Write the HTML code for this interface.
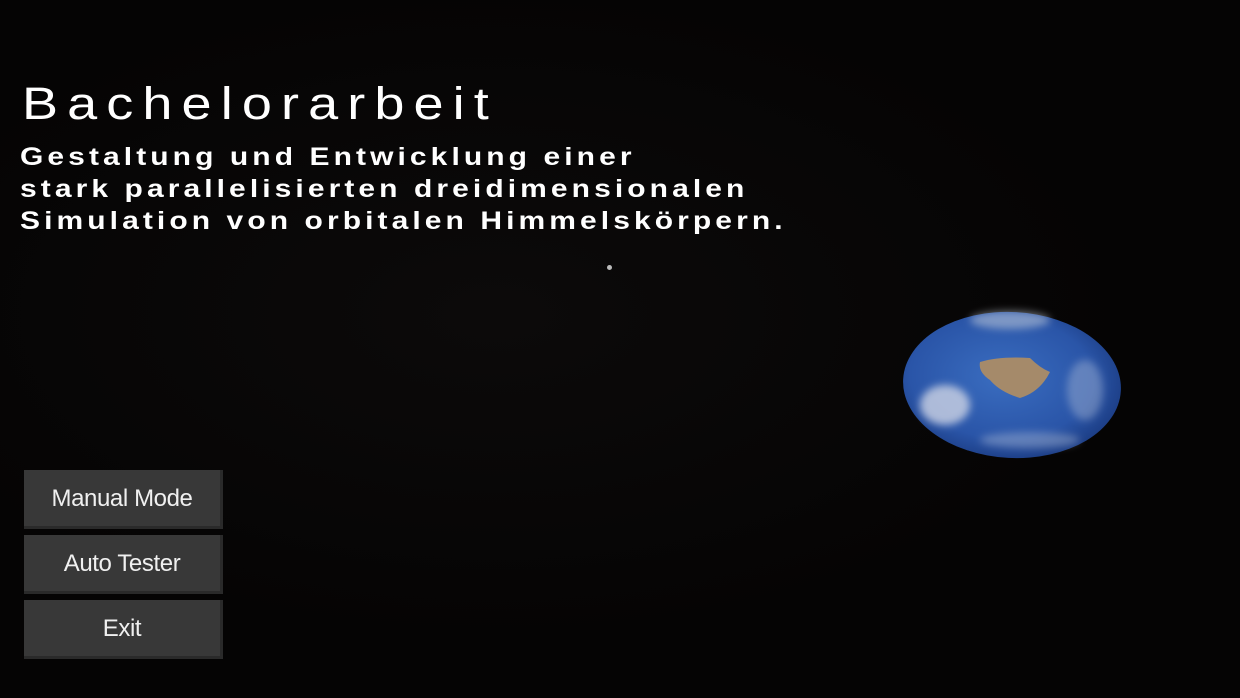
<!DOCTYPE html>
<html><head><style>
body{margin:0;width:1240px;height:698px;background:#050404;overflow:hidden;position:relative;font-family:"Liberation Sans",sans-serif;color:#fff}
.t{position:absolute;left:22px;top:76px;font-size:45px;letter-spacing:7.6px;line-height:56px;transform:scaleX(1.2);transform-origin:left top;white-space:nowrap}
.s{position:absolute;left:20px;top:141px;font-size:25px;letter-spacing:3.4px;line-height:32px;font-weight:bold;transform:scaleX(1.2);transform-origin:left top;white-space:nowrap}
.b{position:absolute;left:24px;width:196px;height:56px;background:#383838;border-right:3px solid #2a2a2a;border-bottom:3px solid #2a2a2a;box-sizing:content-box;font-size:24px;letter-spacing:-0.4px;text-align:center;line-height:58px;color:#f0f0f0}
</style></head><body>
<div style="position:absolute;inset:0;background:radial-gradient(ellipse at 40% 45%,#0c0a0a 0%,#050404 60%)"></div>
<div class="t">Bachelorarbeit</div>
<div class="s">Gestaltung und Entwicklung einer<br>stark parallelisierten dreidimensionalen<br>Simulation von orbitalen Himmelskörpern.</div>
<div style="position:absolute;left:607px;top:265px;width:5px;height:5px;border-radius:50%;background:#bbb"></div>
<svg style="position:absolute;left:0;top:0" width="1240" height="698">
<defs><radialGradient id="g" cx="45%" cy="45%" r="60%"><stop offset="0" stop-color="#3a6dc0"/><stop offset="0.7" stop-color="#2a55a8"/><stop offset="1" stop-color="#1a3a80"/></radialGradient>
<filter id="bl"><feGaussianBlur stdDeviation="4"/></filter></defs>
<ellipse cx="1012" cy="385" rx="109" ry="73" transform="rotate(3 1012 385)" fill="url(#g)"/>
<path d="M980 362 Q1000 356 1030 358 Q1040 368 1050 372 Q1040 392 1020 398 Q1000 392 990 380 Q978 372 980 362Z" fill="#a58a6a"/>
<g filter="url(#bl)">
<ellipse cx="945" cy="405" rx="25" ry="20" fill="#d8dce8" opacity="0.75"/>
<ellipse cx="1010" cy="320" rx="40" ry="9" fill="#cfd8e0" opacity="0.5"/>
<ellipse cx="1085" cy="390" rx="18" ry="30" fill="#c8d0e0" opacity="0.35"/>
<ellipse cx="1030" cy="440" rx="50" ry="8" fill="#c8d0e0" opacity="0.35"/>
</g>
</svg>
<div class="b" style="top:470px">Manual Mode</div>
<div class="b" style="top:535px">Auto Tester</div>
<div class="b" style="top:600px">Exit</div>
</body></html>
